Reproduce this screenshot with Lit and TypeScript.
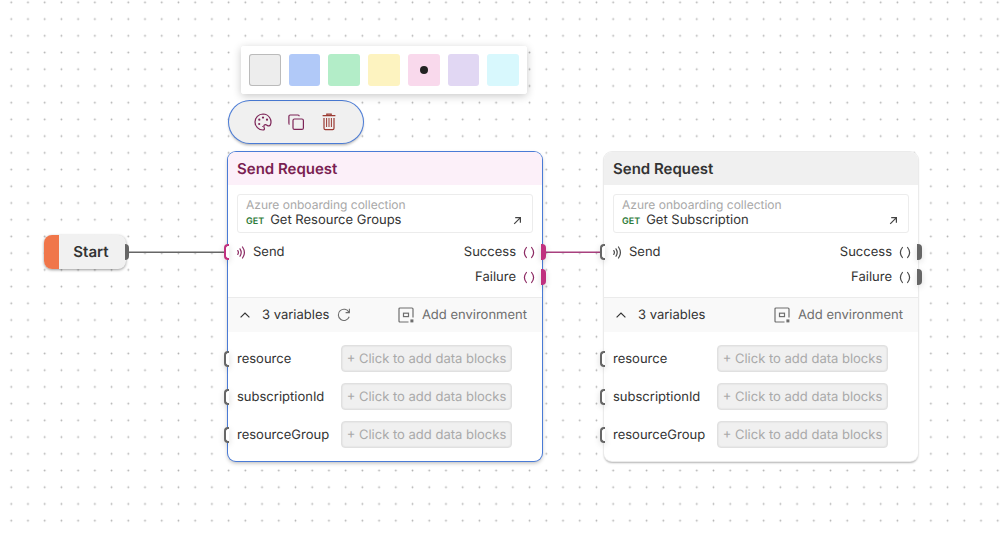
import { LitElement, html, css, svg, nothing } from "lit";
import { customElement, property, state } from "lit/decorators.js";
import { classMap } from "lit/directives/class-map.js";
import { styleMap } from "lit/directives/style-map.js";

interface Swatch {
  name: string;
  color: string;
}

interface Point {
  x: number;
  y: number;
}

const SWATCHES: Swatch[] = [
  { name: "Default", color: "#ededed" },
  { name: "Blue", color: "#b1c9f8" },
  { name: "Green", color: "#b3edc8" },
  { name: "Yellow", color: "#fdf3c0" },
  { name: "Pink", color: "#f9d9ec" },
  { name: "Purple", color: "#e1d7f3" },
  { name: "Cyan", color: "#d8f8fd" },
];

const VARIABLES = ["resource", "subscriptionId", "resourceGroup"];

const at = (p: Point) => styleMap({ left: `${p.x}px`, top: `${p.y}px` });

const paletteIcon = html`<svg width="18" height="18" viewBox="0 0 18 18" fill="none" stroke="currentColor" stroke-width="1.2">
  <path d="M9 1a8 8 0 1 0 0 16c1.300 0 1.700-.9 1.300-1.900c-.5-1.200-.7-2.100-.1-2.900c.8-1 2-.6 2.800 0c1.400 1.100 2.700 1 3.400-.3A8 8 0 0 0 9 1z" />
  <g fill="currentColor" stroke="none">
    <circle cx="9" cy="4.600" r="1.100" /><circle cx="5.300" cy="6.700" r="1.100" /><circle cx="5.200" cy="11" r="1.100" />
    <circle cx="13" cy="6.700" r="1.100" /><circle cx="8.600" cy="13.600" r=".5" />
  </g>
</svg>`;

const copyIcon = html`<svg width="18" height="18" viewBox="0 0 18 18" fill="none" stroke="currentColor" stroke-width="1.200">
  <rect x="6" y="6" width="10.400" height="10.400" rx="1.500" />
  <path d="M2.500 11.400Q1.900 11.400 1.900 10V3.300Q1.900 2 3.200 2H11Q12.200 2 12.200 3.200" />
</svg>`;

const trashIcon = html`<svg width="18" height="18" viewBox="0 0 18 18" fill="none" stroke="currentColor" stroke-width="1.200">
  <path d="M2.600 2.600H15.400M6.800 2.400V1.200H11.200V2.400" />
  <path d="M4 5V15.200Q4 16.600 5.400 16.600H12.600Q14 16.600 14 15.200V5" />
  <path d="M6.600 5V14M9 5V14M11.400 5V14" stroke-width="1" />
</svg>`;

const waveIcon = html`<svg width="9" height="13" viewBox="0 0 9 13" fill="none" stroke="currentColor" stroke-width="1.200" stroke-linecap="round">
  <path d="M.8 4.600Q2 6.500 .8 8.400M3 2.800Q5.400 6.500 3 10.200M5.500 1Q9.300 6.500 5.500 12" />
</svg>`;

const arrowIcon = html`<svg width="9" height="9" viewBox="0 0 9 9" fill="none" stroke="currentColor" stroke-width="1.200">
  <path d="M1.200 7.800L7.200 1.800M2.200 1.600H7.400V6.800" />
</svg>`;

const parensIcon = html`<svg width="12" height="13" viewBox="0 0 12 13" fill="none" stroke="currentColor" stroke-width="1.200" stroke-linecap="round">
  <path d="M3.400 1.500Q-.6 6.500 3.400 11.500M8.600 1.500Q12.600 6.500 8.600 11.500" />
</svg>`;

const chevronIcon = html`<svg width="10" height="6" viewBox="0 0 10 6" fill="none" stroke="currentColor" stroke-width="1.200">
  <path d="M.6 5.400L5 1L9.400 5.400" />
</svg>`;

const refreshIcon = html`<svg width="14" height="14" viewBox="0 0 14 14" fill="none" stroke="currentColor" stroke-width="1.100">
  <path d="M11.900 4.200A5.600 5.600 0 1 0 12.200 8.800M12.400 .8V4.600H8.600" />
</svg>`;

const environmentIcon = html`<svg width="16" height="16" viewBox="0 0 16 16" fill="none" stroke="currentColor" stroke-width="1.200">
  <path d="M10.500 15H2Q1 15 1 14V2Q1 1 2 1H14Q15 1 15 2V10.500" />
  <rect x="5.500" y="6.200" width="5" height="3.400" />
  <rect x="12.400" y="12.400" width="3" height="3" fill="currentColor" stroke="none" />
</svg>`;

const reset = css`
  :host {
    box-sizing: border-box;
    font-family: Inter, sans-serif;
    text-rendering: geometricPrecision;
    color: #333;
  }
  *,
  *::before,
  *::after {
    box-sizing: border-box;
  }
  button {
    font: inherit;
    color: inherit;
    text-rendering: inherit;
    background: none;
    border: 0;
    padding: 0;
    margin: 0;
    cursor: pointer;
  }
  svg {
    display: block;
    flex: none;
  }
`;

@customElement("color-palette")
class ColorPalette extends LitElement {
  @property() selected = "Pink";

  static styles = [
    reset,
    css`
      .palette {
        display: flex;
        gap: 8px;
        width: 286px;
        margin: 0;
        padding: 8px;
        border: 0;
        border-radius: 3px;
        background: #fff;
        box-shadow: 0 2px 8px rgba(0, 0, 0, 0.22);
      }
      .swatch {
        flex: 1;
        min-width: 0;
        height: 32px;
        display: grid;
        place-items: center;
        border-radius: 3px;
        cursor: pointer;
      }
      .outlined {
        box-shadow: inset 0 0 0 1px #bbb;
      }
      .radio {
        appearance: none;
        width: 8px;
        height: 8px;
        margin: 0;
        border-radius: 50%;
      }
      .radio:checked {
        background: #222;
      }
    `,
  ];

  render() {
    return html`<fieldset class="palette" aria-label="Block color">
      ${SWATCHES.map(
        (s, i) => html`<label
          class=${classMap({ swatch: true, outlined: i === 0 })}
          style=${styleMap({ background: s.color })}
        >
          <input
            class="radio"
            type="radio"
            name="color"
            aria-label=${s.name}
            .checked=${s.name === this.selected}
            @change=${() => (this.selected = s.name)}
          />
        </label>`
      )}
    </fieldset>`;
  }
}

@customElement("block-toolbar")
class BlockToolbar extends LitElement {
  static styles = [
    reset,
    css`
      .toolbar {
        display: flex;
        align-items: center;
        gap: 15px;
        height: 42px;
        padding: 0 25px;
        border-radius: 21px;
        background: #f0f0f0;
        color: #7d2457;
        box-shadow: 0 0 0 1px #4a7bd6, 0 2px 3px rgba(0, 0, 0, 0.35);
      }
      .tool {
        display: block;
      }
      .danger {
        color: #9b3a32;
      }
    `,
  ];

  render() {
    return html`<div class="toolbar" role="toolbar">
      <button class="tool" aria-label="Change color">${paletteIcon}</button>
      <button class="tool" aria-label="Duplicate">${copyIcon}</button>
      <button class="tool danger" aria-label="Delete">${trashIcon}</button>
    </div>`;
  }
}

@customElement("start-block")
class StartBlock extends LitElement {
  static styles = [
    reset,
    css`
      .start {
        display: flex;
        height: 34px;
        width: 82px;
        border-radius: 8px;
        background: #f1f1f1;
        box-shadow: 0 1px 3px rgba(0, 0, 0, 0.4);
      }
      .stripe {
        width: 15px;
        border-radius: 8px 0 0 8px;
        background: #f0764a;
      }
      .name {
        flex: 1;
        text-align: center;
        font-size: 15px;
        line-height: 34px;
        font-weight: 600;
        padding-right: 3px;
      }
      .port {
        position: absolute;
        right: -3px;
        top: 9px;
        width: 4px;
        height: 16px;
        border-radius: 0 4px 4px 0;
        background: #666;
      }
    `,
  ];

  render() {
    return html`<div class="start">
      <span class="stripe"></span>
      <span class="name">Start</span>
      <span class="port"></span>
    </div>`;
  }
}

@customElement("request-block")
class RequestBlock extends LitElement {
  @property() request = "";
  @property({ type: Boolean, reflect: true }) selected = false;
  @state() private open = true;

  static styles = [
    reset,
    css`
      :host {
        --accent: #4a4a4a;
        --port: #666;
        font-size: 13px;
        line-height: 16px;
      }
      :host([selected]) {
        --accent: #8c2a63;
        --port: #c0317f;
      }
      .card {
        width: 314px;
        border-radius: 8px;
        background: #fff;
        box-shadow: 0 0 0 1px #ebebeb, 0 2px 2px rgba(0, 0, 0, 0.3);
      }
      .selected {
        box-shadow: 0 0 0 1px #4a7bd6, 0 2px 4px rgba(0, 0, 0, 0.3);
      }
      .title {
        margin: 0;
        padding: 1px 9px 0;
        border-radius: 8px 8px 0 0;
        background: #f0f0f0;
        font-size: 15px;
        line-height: 32px;
        font-weight: 600;
      }
      .selected .title {
        background: #fcf0f9;
        color: #7a1e52;
      }
      .request {
        display: flex;
        align-items: end;
        justify-content: space-between;
        margin: 9px 9px 7px;
        padding: 2px 10px 4px 8px;
        border: 1px solid #ececec;
        border-radius: 3px;
        line-height: 15px;
        color: inherit;
        text-decoration: none;
      }
      .collection {
        display: block;
        font-size: 12px;
        color: #a8a8a8;
      }
      .call {
        display: flex;
        align-items: baseline;
        gap: 6px;
        height: 16px;
        line-height: 17px;
      }
      .method {
        font-size: 9px;
        font-weight: 600;
        color: #2c7a38;
      }
      .open {
        color: #444;
        padding-bottom: 3px;
      }
      .flow {
        display: grid;
        grid-template-columns: 1fr auto;
        grid-auto-rows: 25px;
        align-items: center;
        padding-bottom: 7px;
      }
      .signal {
        position: relative;
        display: flex;
        align-items: center;
        gap: 7px;
        height: 24px;
        padding: 0 7px 0 9px;
        align-self: start;
      }
      .signal svg {
        color: var(--accent);
      }
      .output {
        grid-column: 2;
        justify-content: end;
      }
      .port-in {
        position: absolute;
        left: -4px;
        top: calc(50% - 8px);
        width: 5px;
        height: 16px;
        border: 2px solid #666;
        border-right: 0;
        border-radius: 4px 0 0 4px;
        background: #fff;
        box-shadow: 0 2px 6px rgba(0, 0, 0, 0.15);
      }
      .signal .port-in {
        border-color: var(--port);
      }
      .port-out {
        position: absolute;
        right: -4px;
        top: 4px;
        width: 5px;
        height: 16px;
        border-radius: 0 4px 4px 0;
        background: var(--port);
        box-shadow: 0 2px 6px rgba(0, 0, 0, 0.15);
      }
      .bar {
        display: flex;
        align-items: center;
        justify-content: space-between;
        height: 35px;
        padding: 0 15px 0 12px;
        border-top: 1px solid #ebebeb;
        background: #f9f9f9;
      }
      .group {
        display: flex;
        align-items: center;
        gap: 8px;
      }
      .toggle {
        display: flex;
        align-items: center;
        gap: 12px;
      }
      .muted {
        display: flex;
        align-items: center;
        gap: 8px;
        color: #6e6e6e;
      }
      .variables {
        display: grid;
        gap: 11px;
        padding: 13px 0;
      }
      .variable {
        position: relative;
        display: grid;
        grid-template-columns: 104px 171px;
        align-items: center;
        padding-left: 9px;
      }
      .data {
        height: 27px;
        border: 1px solid #e0e0e0;
        border-radius: 4px;
        background: #f0f0f0;
        box-shadow: inset 0 0 2px rgba(0, 0, 0, 0.12);
        color: #a9a9a9;
      }
    `,
  ];

  render() {
    return html`<article class=${classMap({ card: true, selected: this.selected })}>
      <h2 class="title">Send Request</h2>
      <a class="request" href="#request">
        <span>
          <span class="collection">Azure onboarding collection</span>
          <span class="call"><span class="method">GET</span><span>${this.request}</span></span>
        </span>
        <span class="open">${arrowIcon}</span>
      </a>
      <div class="flow">
        <div class="signal"><span class="port-in"></span>${waveIcon}<span>Send</span></div>
        ${["Success", "Failure"].map(
          (name) => html`<div class="signal output">
            <span>${name}</span>${parensIcon}<span class="port-out"></span>
          </div>`
        )}
      </div>
      <div class="bar">
        <div class="group">
          <button class="toggle" aria-expanded=${this.open} @click=${() => (this.open = !this.open)}>
            ${chevronIcon}<span>3 variables</span>
          </button>
          ${this.selected
            ? html`<button class="muted" aria-label="Refresh variables">${refreshIcon}</button>`
            : nothing}
        </div>
        <button class="muted">${environmentIcon}<span>Add environment</span></button>
      </div>
      ${this.open
        ? html`<div class="variables">
            ${VARIABLES.map(
              (name) => html`<div class="variable">
                <span class="port-in"></span>
                <span id=${name}>${name}</span>
                <button class="data" aria-describedby=${name}>+ Click to add data blocks</button>
              </div>`
            )}
          </div>`
        : nothing}
    </article>`;
  }
}

@customElement("app-root")
class AppRoot extends LitElement {
  static styles = [
    reset,
    css`
      :host {
        display: block;
        height: 100vh;
      }
      .canvas {
        position: relative;
        height: 100%;
        overflow: hidden;
        background: #fff;
      }
      .backdrop {
        width: 100%;
        height: 100%;
      }
      .node {
        position: absolute;
      }
    `,
  ];

  render() {
    return html`<main class="canvas">
      <svg class="backdrop" aria-hidden="true">
        <defs>
          <pattern id="dots" width="16.72" height="16.72" x="2.9" y="-6" patternUnits="userSpaceOnUse">
            <circle cx="8.360" cy="8.360" r=".9" fill="#b0b0b0" />
          </pattern>
        </defs>
        <rect width="100%" height="100%" fill="url(#dots)" />
        ${svg`<path d="M128 252.200H225" stroke="#666" stroke-width="1.400" />
        <path d="M545 252.200H602" stroke="#a8407e" stroke-width="1.400" />`}
      </svg>
      <start-block class="node" style=${at({ x: 44, y: 235 })}></start-block>
      <request-block class="node" style=${at({ x: 228, y: 152 })} selected request="Get Resource Groups"></request-block>
      <request-block class="node" style=${at({ x: 604, y: 152 })} request="Get Subscription"></request-block>
      <block-toolbar class="node" style=${at({ x: 229, y: 101 })}></block-toolbar>
      <color-palette class="node" style=${at({ x: 241, y: 46 })}></color-palette>
    </main>`;
  }
}
